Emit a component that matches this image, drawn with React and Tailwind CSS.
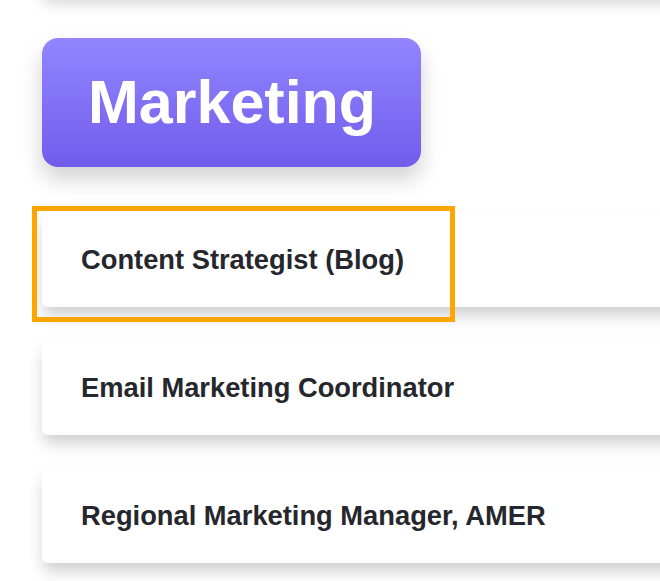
import React from 'react';

const roles = [
  'Content Strategist (Blog)',
  'Email Marketing Coordinator',
  'Regional Marketing Manager, AMER',
];

const App = () => {
  return (
    <div
      className="w-[660px] h-[581px] overflow-hidden bg-white relative"
      style={{ fontFamily: '"Liberation Sans", Arial, sans-serif' }}
    >
      {/* Card above, cut off */}
      <div className="ml-[42px] -mt-[60px] h-[54px] w-[700px] bg-white rounded-md shadow-[0_10px_16px_-2px_rgba(0,0,0,0.2)]" />

      <div className="pl-[42px] pt-[44px]">
        {/* Department badge */}
        <div className="inline-flex items-center h-[129px] w-[379px] pl-[46px] rounded-2xl bg-gradient-to-b from-[#9385ff] to-[#715ceb] shadow-[0_12px_22px_rgba(0,0,0,0.18)]">
          <span className="text-white font-bold text-[61px] leading-none">Marketing</span>
        </div>

        {/* Job list */}
        <div className="flex flex-col gap-[32px] mt-[44px]">
          {roles.map((role, i) => (
            <div
              key={role}
              className="relative w-[700px] h-[96px] flex items-center pl-[39px] bg-white rounded-md shadow-[0_10px_16px_-2px_rgba(0,0,0,0.2)]"
            >
              <span className="text-[27.3px] font-bold text-[#25272c] pt-[2px]">{role}</span>
              {i === 0 && (
                <div className="absolute -left-[10px] -top-[5px] w-[423px] h-[116px] border-[5px] border-[#ffa500] pointer-events-none" />
              )}
            </div>
          ))}
        </div>
      </div>
    </div>
  );
};

export default App;
